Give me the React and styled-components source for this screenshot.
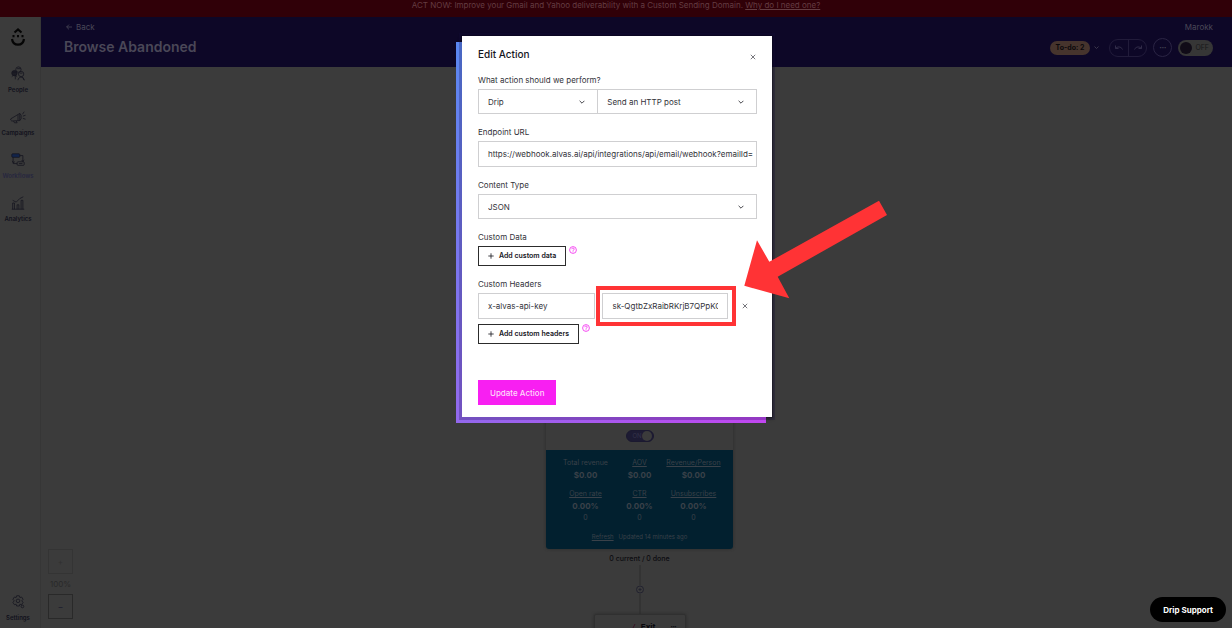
import React from 'react';
import styled, { createGlobalStyle } from 'styled-components';

const GlobalStyle = createGlobalStyle`
  * {
    box-sizing: border-box;
  }

  body {
    margin: 0;
    background: #3b3b3b;
    font-family: Inter, 'Liberation Sans', sans-serif;
    font-size: 8px;
    line-height: 12px;
    color: #33333a;
  }

  button, input, select {
    font: inherit;
    color: inherit;
    margin: 0;
  }

  button {
    cursor: pointer;
  }
`;

const Page = styled.div`
  display: flex;
  flex-direction: column;
  height: 100vh;
  overflow: hidden;
`;

const Banner = styled.div`
  flex: none;
  height: 17px;
  background: #300008;
  color: #643c42;
  line-height: 10px;
  text-align: center;
  a {
    color: inherit;
  }
`;

const Body = styled.div`
  display: flex;
  flex: 1;
  min-height: 0;
`;

const Sidebar = styled.nav`
  display: flex;
  flex-direction: column;
  align-items: center;
  flex: none;
  width: 41px;
  padding: 10px 4px 6px 0;
  border-right: 1px solid #363636;
`;

const Logo = styled.svg`
  width: 16px;
  height: 20px;
  margin-bottom: 18px;
`;

const NavItem = styled.a`
  display: flex;
  flex-direction: column;
  align-items: center;
  height: 43px;
  color: ${props => (props.$active ? '#26263f' : '#11111c')};
  font-size: 6px;
  font-weight: 600;
  line-height: 8px;
  text-decoration: none;
  svg {
    width: 16px;
    height: 16px;
    margin: 1px 0 4px;
  }
`;

const SettingsItem = styled(NavItem)`
  height: auto;
  margin-top: auto;
`;

const Main = styled.main`
  display: flex;
  flex-direction: column;
  flex: 1;
  position: relative;
  min-width: 0;
`;

const Header = styled.header`
  display: flex;
  justify-content: space-between;
  flex: none;
  height: 50px;
  padding: 4px 19px 0 23px;
  background: #0d0727;
  color: #4a4757;
`;

const BackLink = styled.a`
  display: flex;
  align-items: center;
  gap: 4px;
  padding-left: 2px;
  color: inherit;
  text-decoration: none;
`;

const Title = styled.h1`
  margin: 4px 0 0;
  font-size: 14px;
  font-weight: 600;
  line-height: 20px;
`;

const Account = styled.div`
  text-align: right;
`;

const Tools = styled.div`
  display: flex;
  align-items: center;
  gap: 6px;
  margin-top: 5px;
`;

const Todo = styled.button`
  display: flex;
  align-items: center;
  gap: 4px;
  padding: 0;
  border: 0;
  background: none;
  svg {
    width: 5px;
    height: 5px;
  }
`;

const TodoPill = styled.span`
  padding: 1px 6px;
  border-radius: 7px;
  background: #46342d;
  color: #0b080b;
  font-size: 7px;
  font-weight: 700;
`;

const History = styled.div`
  display: flex;
  height: 18px;
  margin-left: 4px;
  border: 1px solid #211b3a;
  border-radius: 9px;
`;

const HistoryButton = styled.button`
  display: flex;
  align-items: center;
  justify-content: center;
  width: 18px;
  padding: 0;
  border: 0;
  background: none;
  & + & {
    border-left: 1px solid #211b3a;
  }
  svg {
    width: 10px;
    height: 8px;
  }
`;

const MoreButton = styled.button`
  width: 19px;
  height: 19px;
  padding: 0;
  border: 1px solid #2a2444;
  border-radius: 50%;
  background: none;
  font-size: 4px;
  line-height: 8px;
`;

const Power = styled.button`
  display: flex;
  align-items: center;
  gap: 3px;
  height: 16px;
  padding: 0 4px 0 2px;
  border: 0;
  border-radius: 8px;
  background: #363636;
  color: #18181a;
  font-size: 7px;
`;

const Knob = styled.span`
  width: 12px;
  height: 12px;
  border-radius: 50%;
  background: #100b17;
`;

const Canvas = styled.section`
  display: flex;
  flex-direction: column;
  align-items: center;
  flex: 1;
  min-height: 0;
  padding: 333px 0 0 6px;
  overflow: hidden;
`;

const StepCard = styled.article`
  flex: none;
  width: 187px;
  border-radius: 3px;
  box-shadow: 0 0 3px #2a2a2a;
  overflow: hidden;
`;

const StepTop = styled.div`
  display: flex;
  align-items: flex-end;
  justify-content: center;
  height: 50px;
  padding-bottom: 8px;
`;

const StepSwitch = styled.button`
  display: flex;
  align-items: center;
  justify-content: space-between;
  width: 28px;
  height: 12px;
  padding: 0 1px 0 6px;
  border: 1px solid #1b1930;
  border-radius: 6px;
  background: #1d1b33;
  color: #34334a;
  font-size: 6px;
  &::after {
    content: '';
    width: 10px;
    height: 10px;
    border-radius: 50%;
    background: #3b3b3b;
  }
`;

const Stats = styled.div`
  display: grid;
  grid-template-columns: repeat(3, 54px);
  align-content: start;
  justify-content: center;
  row-gap: 7px;
  height: 99px;
  padding-top: 7px;
  background: #02202f;
  color: #3a4149;
  text-align: center;
`;

const Stat = styled.div`
  display: flex;
  flex-direction: column;
  align-items: center;
  font-size: 7px;
  white-space: nowrap;
  strong {
    font-size: 8px;
    font-weight: 700;
  }
`;

const StatName = styled.span`
  text-decoration: ${props => (props.$plain ? 'none' : 'underline')};
`;

const Updated = styled.div`
  grid-column: 1 / -1;
  font-size: 6px;
  a {
    margin-right: 5px;
    color: inherit;
  }
`;

const Count = styled.div`
  flex: none;
  margin-top: 4px;
  color: #0b0b10;
  font-size: 7px;
  font-weight: 500;
`;

const Connector = styled.svg`
  flex: none;
  width: 10px;
  height: 49px;
`;

const ExitCard = styled.div`
  display: flex;
  flex: none;
  align-items: flex-start;
  justify-content: space-between;
  width: 92px;
  height: 26px;
  padding: 6px 8px 0 36px;
  border: 1px solid #303030;
  border-radius: 2px;
  box-shadow: 0 0 3px #2a2a2a;
  color: #08080c;
  font-weight: 700;
`;

const ExitName = styled.span`
  margin-right: 10px;
`;

const Dots = styled.span`
  font-size: 4px;
`;

const ZoomControls = styled.div`
  position: absolute;
  bottom: 9px;
  left: 7px;
  display: flex;
  flex-direction: column;
  align-items: center;
  gap: 4px;
  color: #292929;
`;

const ZoomButton = styled.button`
  width: 25px;
  height: 25px;
  padding: 0;
  border: 1px solid ${props => (props.disabled ? '#343434' : '#292929')};
  background: none;
  color: ${props => (props.disabled ? '#303030' : '#17172b')};
`;

const Overlay = styled.div`
  position: fixed;
  inset: 0;
  display: flex;
  align-items: flex-start;
  justify-content: center;
  padding: 36px 0 0 2px;
`;

const Dialog = styled.form`
  position: relative;
  z-index: 0;
  width: 310px;
  padding: 12px 15px 12px 16px;
  background: #fff;
  box-shadow: 0 0 0 1px rgba(0, 0, 0, 0.25), 0 1px 3px 1px rgba(0, 0, 0, 0.35);
  &::before {
    content: '';
    position: absolute;
    z-index: -2;
    top: 6px;
    left: -6px;
    width: 100%;
    height: 100%;
    background: linear-gradient(135deg, #5987f0, #8d6cec 50%, #c146f0);
  }
  &::after {
    content: '';
    position: absolute;
    z-index: -1;
    inset: 0;
    background: #fff;
    box-shadow: 0 0 0 3px rgba(20, 10, 60, 0.25);
  }
`;

const DialogHead = styled.div`
  display: flex;
  justify-content: space-between;
  margin-bottom: 14px;
`;

const DialogTitle = styled.h2`
  margin: 0;
  color: #15151c;
  font-size: 10px;
  font-weight: 500;
  line-height: 12px;
`;

const IconButton = styled.button`
  display: flex;
  align-items: center;
  justify-content: center;
  width: 8px;
  height: 18px;
  padding: 0;
  border: 0;
  background: none;
  svg {
    width: 6px;
    height: 6px;
  }
`;

const CloseButton = styled(IconButton)`
  margin-bottom: -6px;
`;

const RemoveButton = styled(IconButton)`
  margin: 0 8px 0 6px;
`;

const Field = styled.div`
  margin-bottom: ${props => (props.$tight ? '5px' : '12px')};
`;

const Label = styled.label`
  display: block;
  margin-bottom: 3px;
`;

const Row = styled.div`
  display: flex;
  align-items: ${props => props.$align || 'center'};
  gap: ${props => props.$gap || '0'};
`;

const SelectBox = styled.div`
  display: grid;
  align-items: center;
  flex: ${props => props.$grow || 1};
  height: 25px;
  border: 1px solid #cfcfd1;
  & + & {
    border-left: 0;
  }
  select {
    grid-area: 1 / 1;
    width: 100%;
    height: 100%;
    padding: 0 24px 0 9px;
    border: 0;
    background: none;
    appearance: none;
  }
  svg {
    grid-area: 1 / 1;
    justify-self: end;
    width: 6px;
    height: 6px;
    margin-right: 12px;
    pointer-events: none;
  }
`;

const TextInput = styled.input`
  display: block;
  width: 100%;
  min-width: 0;
  height: 26px;
  padding: 0 3px 0 9px;
  border: 1px solid #cfcfd1;
  background: #fff;
`;

const HeaderInput = styled(TextInput)`
  width: auto;
  flex: ${props => props.$grow} 1 0;
  padding-right: 9px;
`;

const AddButton = styled.button`
  display: flex;
  align-items: center;
  gap: 5px;
  height: 20px;
  padding: 0 9px;
  border: 1px solid #2c2c2c;
  background: #fff;
  color: #15151c;
  font-size: 7px;
  font-weight: 600;
  white-space: nowrap;
  svg {
    width: 6px;
    height: 6px;
  }
`;

const Help = styled.svg`
  width: 8px;
  height: 8px;
`;

const SubmitButton = styled.button`
  height: 25px;
  margin-top: 36px;
  padding: 0 12px;
  border: 0;
  background: #f81ff2;
  color: #ffd9fb;
  font-weight: 500;
`;

const Highlight = styled.div`
  position: absolute;
  top: 250px;
  left: 134px;
  width: 140px;
  height: 40px;
  border: 4px solid #ff3335;
  pointer-events: none;
`;

const Arrow = styled.svg`
  position: absolute;
  top: 164px;
  left: 282px;
  width: 144px;
  height: 99px;
  pointer-events: none;
`;

const SupportButton = styled.button`
  position: fixed;
  right: 6px;
  bottom: 6px;
  height: 25px;
  padding: 0 13px;
  border: 0;
  border-radius: 13px;
  background: #000;
  color: #fff;
  font-weight: 700;
`;

const Chevron = () => (
  <svg viewBox="0 0 6 6" fill="none" stroke="currentColor" strokeWidth="0.9">
    <path d="M0.6 1.8 3 4.2 5.4 1.8" />
  </svg>
);

const Cross = () => (
  <svg viewBox="0 0 6 6" fill="none" stroke="#55555c" strokeWidth="0.8">
    <path d="M0.8 0.8 5.2 5.2M5.2 0.8 0.8 5.2" />
  </svg>
);

const Plus = () => (
  <svg viewBox="0 0 6 6" fill="none" stroke="currentColor" strokeWidth="0.8">
    <path d="M3 0.3V5.7M0.3 3H5.7" />
  </svg>
);

const HelpIcon = () => (
  <Help viewBox="0 0 8 8" fill="none" stroke="#f43df0" strokeWidth="0.9">
    <circle cx="4" cy="4" r="3.4" />
    <path d="M2.8 3.2c0-1.6 2.5-1.5 2.4 0 0 .8-1.2.8-1.2 1.6M4 5.4v.8" />
  </Help>
);

const navItems = [
  {
    name: 'People',
    icon: (
      <>
        <circle cx="9.5" cy="4" r="3" />
        <circle cx="5" cy="8" r="3" fill="#1c1c24" />
        <circle cx="12.5" cy="9" r="3" />
        <path d="M2 12c1-2 5-2 6 0M6 11v4M9 16c0-4 6-5 7 0M14 12l2 4M3 7h4M11 8h3M8 3h4" />
      </>
    ),
  },
  {
    name: 'Campaigns',
    icon: (
      <path d="M1 11 11 5v8L2 13.500Q0 12.500 1 11M9 6.500v6M11 5l1.500 2v4L11 13M4 13.500l1 2h3l-1-2M14 6l2-3M14.500 8l3-1M14.500 10.500l3 1" />
    ),
  },
  {
    name: 'Workflows',
    active: true,
    icon: (
      <>
        <rect x="2" y="2" width="9" height="4" rx="1" fill="#12244a" />
        <rect x="8" y="11" width="8" height="4" rx="1" />
        <path d="M11 4h3.500v7M3.500 6v7H8M2.500 10l1 2 2-1M13 9l1.500 1.500L16 9M10 13h4" />
      </>
    ),
  },
  {
    name: 'Analytics',
    icon: (
      <path d="M3 16V9h2v7M8 16v-5h2v5M12.500 16V6h2v10M2 16h14M3 6l4 2 4-4 4-2" />
    ),
  },
];

const stats = [
  { name: 'Total revenue', value: '$0.00', plain: true },
  { name: 'AOV', value: '$0.00' },
  { name: 'Revenue/Person', value: '$0.00' },
  { name: 'Open rate', value: '0.00%', total: '0' },
  { name: 'CTR', value: '0.00%', total: '0' },
  { name: 'Unsubscribes', value: '0.00%', total: '0' },
];

const SideNav = () => (
  <Sidebar>
    <Logo viewBox="0 0 16 20" fill="none" stroke="#050505" strokeWidth="2.200">
      <path d="M4.500 5.500 8 2.500l3.500 3M2 12c1 7.500 11 7.500 12 0" />
      <path d="M2.500 9.200h2M7 9.200h2M11.500 9.200h2" />
    </Logo>
    {navItems.map(item => (
      <NavItem key={item.name} href="#" $active={item.active}>
        <svg viewBox="0 0 18 18" fill="none" stroke="#15151f" strokeWidth="0.9">{item.icon}</svg>
        {item.name}
      </NavItem>
    ))}
    <SettingsItem href="#">
      <svg viewBox="0 0 18 18" fill="none" stroke="#15151f" strokeWidth="0.9">
        <path d="M7.500 2h3l.6 2 2-.6 1.600 2.600L13.200 7.700l1.500 1.700-1.600 2.600-2-.5-.6 2h-3l-.6-2-2 .5L3.300 9.400l1.500-1.700L3.300 6l1.600-2.600 2 .6z" />
        <circle cx="9" cy="7.700" r="2" />
        <circle cx="14" cy="14" r="1.500" />
      </svg>
      Settings
    </SettingsItem>
  </Sidebar>
);

const TopBar = () => (
  <Header>
    <div>
      <BackLink href="#">
        <svg width="6" height="6" viewBox="0 0 6 6" fill="none" stroke="currentColor" strokeWidth="0.8">
          <path d="M6 3H0.600M3 0.600 0.600 3 3 5.400" />
        </svg>
        Back
      </BackLink>
      <Title>Browse Abandoned</Title>
    </div>
    <div>
      <Account>Marokk</Account>
      <Tools>
        <Todo type="button">
          <TodoPill>To-do: 2</TodoPill>
          <Chevron />
        </Todo>
        <History>
          <HistoryButton type="button" aria-label="Undo">
            <svg viewBox="0 0 10 8" fill="none" stroke="#302b48">
              <path d="M1.500 1.500v3h3M1.500 4.500C3 2.500 7 2 8.500 5.500" />
            </svg>
          </HistoryButton>
          <HistoryButton type="button" aria-label="Redo">
            <svg viewBox="0 0 10 8" fill="none" stroke="#302b48">
              <path d="M8.500 1.500v3h-3M8.500 4.500C7 2.500 3 2 1.500 5.500" />
            </svg>
          </HistoryButton>
        </History>
        <MoreButton type="button" aria-label="More">•••</MoreButton>
        <Power type="button">
          <Knob />
          OFF
        </Power>
      </Tools>
    </div>
  </Header>
);

const Workflow = () => (
  <Canvas>
    <StepCard>
      <StepTop>
        <StepSwitch type="button">ON</StepSwitch>
      </StepTop>
      <Stats>
        {stats.map(stat => (
          <Stat key={stat.name}>
            <StatName $plain={stat.plain}>{stat.name}</StatName>
            <strong>{stat.value}</strong>
            {stat.total && <span>{stat.total}</span>}
          </Stat>
        ))}
        <Updated>
          <a href="#">Refresh</a>
          Updated 14 minutes ago
        </Updated>
      </Stats>
    </StepCard>
    <Count>0 current / 0 done</Count>
    <Connector viewBox="0 0 10 49" fill="none" stroke="#2c2c2c">
      <path d="M5 0v20M5 29v20" />
      <circle cx="5" cy="24.500" r="3.500" stroke="#22222f" />
      <path d="M5 23v3M3.500 24.500h3" stroke="#22222f" />
    </Connector>
    <ExitCard>
      <svg width="5" height="12" viewBox="0 0 5 12" stroke="#3a1527"><path d="M1 9 4 3" /></svg>
      <ExitName>Exit</ExitName>
      <Dots>•••</Dots>
    </ExitCard>
  </Canvas>
);

const EditAction = () => (
  <Dialog onSubmit={e => e.preventDefault()}>
    <DialogHead>
      <DialogTitle>Edit Action</DialogTitle>
      <CloseButton type="button" aria-label="Close"><Cross /></CloseButton>
    </DialogHead>
    <Field>
      <Label htmlFor="provider">What action should we perform?</Label>
      <Row>
        <SelectBox $grow={3}>
          <select id="provider" defaultValue="Drip">
            <option>Drip</option>
          </select>
          <Chevron />
        </SelectBox>
        <SelectBox $grow={4}>
          <select aria-label="Action" defaultValue="Send an HTTP post">
            <option>Send an HTTP post</option>
          </select>
          <Chevron />
        </SelectBox>
      </Row>
    </Field>
    <Field>
      <Label htmlFor="endpoint">Endpoint URL</Label>
      <TextInput
        id="endpoint"
        defaultValue="https://webhook.alvas.ai/api/integrations/api/email/webhook?emailId="
      />
    </Field>
    <Field>
      <Label htmlFor="content-type">Content Type</Label>
      <SelectBox>
        <select id="content-type" defaultValue="JSON">
          <option>JSON</option>
        </select>
        <Chevron />
      </SelectBox>
    </Field>
    <Field>
      <Label htmlFor="custom-data">Custom Data</Label>
      <Row $align="flex-start" $gap="3px">
        <AddButton id="custom-data" type="button"><Plus />Add custom data</AddButton>
        <HelpIcon />
      </Row>
    </Field>
    <Field $tight>
      <Label htmlFor="header-name">Custom Headers</Label>
      <Row $gap="7px">
        <HeaderInput id="header-name" $grow={12} defaultValue="x-alvas-api-key" />
        <HeaderInput aria-label="Header value" $grow={13} defaultValue="sk-QgtbZxRaibRKrjB7QPpKG" />
        <RemoveButton type="button" aria-label="Remove header"><Cross /></RemoveButton>
      </Row>
    </Field>
    <Row $align="flex-start" $gap="3px">
      <AddButton type="button"><Plus />Add custom headers</AddButton>
      <HelpIcon />
    </Row>
    <SubmitButton type="submit">Update Action</SubmitButton>
    <Highlight />
    <Arrow viewBox="0 0 144 99" fill="#ff3335">
      <path d="M135 0.700 143 15 33.700 76.700 45.300 98.300 0.300 85.700 13 40.300 25.300 61.700z" />
    </Arrow>
  </Dialog>
);

const App = () => (
  <>
    <GlobalStyle />
    <Page>
      <Banner>
        ACT NOW: Improve your Gmail and Yahoo deliverability with a Custom Sending Domain.{' '}
        <a href="#">Why do I need one?</a>
      </Banner>
      <Body>
        <SideNav />
        <Main>
          <TopBar />
          <Workflow />
          <ZoomControls>
            <ZoomButton type="button" aria-label="Zoom in" disabled>+</ZoomButton>
            100%
            <ZoomButton type="button" aria-label="Zoom out">–</ZoomButton>
          </ZoomControls>
        </Main>
      </Body>
    </Page>
    <Overlay>
      <EditAction />
    </Overlay>
    <SupportButton type="button">Drip Support</SupportButton>
  </>
);

export default App;
